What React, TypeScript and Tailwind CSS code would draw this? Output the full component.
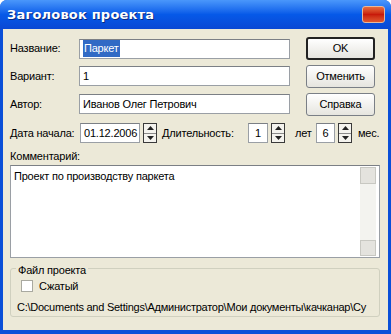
import React from "react";

const font = { fontFamily: '"Liberation Sans", Arial, sans-serif' };

function TextBox({ className, children }: { className: string; children?: React.ReactNode }) {
  return (
    <div
      className={`h-[20px] bg-white border border-[#9a9fa5] border-t-[#7b7f85] flex items-center pl-[3px] text-[11px] text-black ${className}`}
    >
      {children}
    </div>
  );
}

function Spinner() {
  return (
    <div className="w-[14px] h-[20px] border border-[#3a3a3a] bg-[#f4f3ee] flex flex-col ml-[3px]">
      <div className="flex-1 flex items-center justify-center border-b border-[#8a8a8a]">
        <svg width="7" height="4" viewBox="0 0 7 4">
          <path d="M3.5 0 L7 4 L0 4 Z" fill="#222" />
        </svg>
      </div>
      <div className="flex-1 flex items-center justify-center">
        <svg width="7" height="4" viewBox="0 0 7 4">
          <path d="M0 0 L7 0 L3.5 4 Z" fill="#222" />
        </svg>
      </div>
    </div>
  );
}

function Button({ label, isDefault }: { label: string; isDefault?: boolean }) {
  return (
    <div
      className={`w-[69px] h-[23px] rounded-[3px] flex items-center justify-center text-[11px] text-black bg-gradient-to-b from-[#ffffff] to-[#e6e5df] ${
        isDefault ? "border-2 border-[#222]" : "border border-[#7a7f86]"
      }`}
    >
      {label}
    </div>
  );
}

export default function App() {
  return (
    <div className="w-[391px] h-[334px] bg-[#0a4fd8] rounded-t-[7px] flex flex-col overflow-hidden" style={font}>
      {/* title bar */}
      <div className="h-[29px] flex items-center justify-between pl-[7px] pr-[6px] bg-gradient-to-b from-[#4a97fb] via-[#0659e8] to-[#0a48d4]">
        <span
          className="text-white font-bold text-[13px] tracking-[0.2px]"
          style={{ fontFamily: '"DejaVu Sans", sans-serif', textShadow: "1px 1px 0 #0a2a80" }}
        >
          Заголовок проекта
        </span>
        <div className="w-[23px] h-[17px] rounded-[3px] border border-[#e8b89a] bg-gradient-to-b from-[#e86a3c] via-[#c8190a] to-[#e0562e]" />
      </div>

      {/* body */}
      <div className="flex-1 mx-[3px] mb-[4px] bg-[#ece9d8] pl-[7px] pr-[8px] pt-[8px] flex flex-col text-[11px] tracking-[-0.2px] text-black">
        <div className="flex items-center h-[23px]">
          <span className="w-[69px]">Название:</span>
          <TextBox className="w-[211px]">
            <span className="bg-[#316ac5] text-white px-[1px]">Паркет</span>
          </TextBox>
          <div className="ml-[16px]">
            <Button label="OK" isDefault />
          </div>
        </div>
        <div className="flex items-center h-[22px] mt-[5px]">
          <span className="w-[69px]">Вариант:</span>
          <TextBox className="w-[211px]">1</TextBox>
          <div className="ml-[16px]">
            <Button label="Отменить" />
          </div>
        </div>
        <div className="flex items-center h-[22px] mt-[6px]">
          <span className="w-[69px]">Автор:</span>
          <TextBox className="w-[211px]">Иванов Олег Петрович</TextBox>
          <div className="ml-[16px]">
            <Button label="Справка" />
          </div>
        </div>
        <div className="flex items-center h-[20px] mt-[8px]">
          <span className="w-[70px]">Дата начала:</span>
          <TextBox className="w-[60px]">01.12.2006</TextBox>
          <Spinner />
          <span className="ml-[5px] w-[86px]">Длительность:</span>
          <TextBox className="w-[20px] justify-center !pl-0">1</TextBox>
          <Spinner />
          <span className="ml-[10px] w-[21px]">лет</span>
          <TextBox className="w-[19px] justify-center !pl-0">6</TextBox>
          <Spinner />
          <span className="ml-[6px]">мес.</span>
        </div>
        <div className="mt-[5px] h-[16px]">Комментарий:</div>
        <div className="mt-[1px] h-[93px] bg-white border border-[#9a9fa5] border-t-[#7b7f85] flex">
          <div className="flex-1 pl-[3px] pt-[2px]">Проект по производству паркета</div>
          <div className="w-[16px] my-[1px] mr-[3px] bg-[#f3f3ef] flex flex-col justify-between">
            <div className="h-[17px] bg-[#e4e3de] border border-[#c8c8c2]" />
            <div className="h-[16px] bg-[#e4e3de] border border-[#c8c8c2]" />
          </div>
        </div>
        <div className="mt-[10px] h-[49px] border border-[#d0d0bf] rounded-[3px] relative px-[6px] pt-[9px]">
          <span className="absolute -top-[7px] left-[5px] bg-[#ece9d8] px-[2px]">Файл проекта</span>
          <div className="flex items-center ml-[4px]">
            <div className="w-[12px] h-[12px] bg-white border border-[#a9a9a0]" />
            <span className="ml-[6px]">Сжатый</span>
          </div>
          <div className="mt-[4px] whitespace-nowrap tracking-[-0.25px]">
            C:\Documents and Settings\Администратор\Мои документы\качканар\Су
          </div>
        </div>
      </div>
    </div>
  );
}
